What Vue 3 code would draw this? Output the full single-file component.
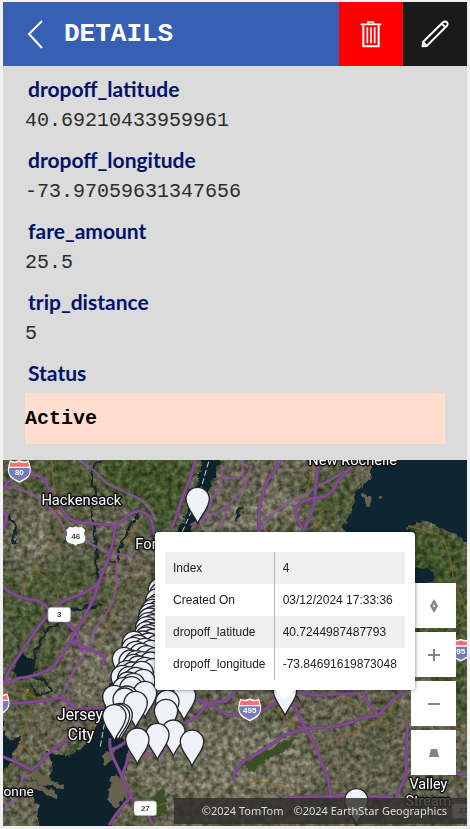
<script setup>
const fields = [
  { label: 'dropoff_latitude', value: '40.69210433959961' },
  { label: 'dropoff_longitude', value: '-73.97059631347656' },
  { label: 'fare_amount', value: '25.5' },
  { label: 'trip_distance', value: '5' }
]

const popupRows = [
  ['Index', '4'],
  ['Created On', '03/12/2024 17:33:36'],
  ['dropoff_latitude', '40.7244987487793'],
  ['dropoff_longitude', '-73.84691619873048']
]

// Pin tips, from the back of the stack to the front
const pins = [
  [593, 206], [1069, 1110], [855, 782],
  [480, 478], [484, 492], [472, 510], [478, 524], [464, 534], [458, 542], [474, 547],
  [452, 554], [462, 562], [449, 568], [470, 575], [446, 582], [458, 588], [441, 594],
  [452, 602], [440, 609], [464, 613], [447, 618], [438, 625], [459, 631], [428, 637],
  [402, 638], [446, 643], [414, 649], [470, 650], [400, 656], [434, 659], [454, 665],
  [408, 668], [423, 674], [440, 681], [372, 686], [466, 687], [392, 694], [410, 696],
  [428, 699], [452, 700], [402, 707], [415, 712], [436, 716], [460, 720], [380, 726],
  [398, 730], [425, 728], [368, 740], [388, 744], [408, 746], [430, 752], [384, 760],
  [400, 764], [372, 776], [394, 774], [435, 788], [343, 800], [380, 802], [374, 808],
  [552, 796], [502, 814], [498, 842], [407, 818], [362, 854], [354, 856], [343, 858],
  [520, 904], [472, 914], [412, 928], [576, 934]
]

const highways = [
  'M9 105 L22 82 L60 62 L110 60 Q132 66 145 98 L190 168 Q205 200 250 203 L346 212 L385 182 Q420 155 446 184 Q462 205 462 240',
  'M346 212 L340 255 Q330 310 298 376 Q286 430 255 480 L225 535 L205 568 Q180 610 160 635 Q120 664 55 670 L18 686',
  'M9 395 Q40 425 90 434 Q125 432 148 466 Q180 478 207 510 Q232 532 238 562 L244 590',
  'M302 374 Q278 405 225 425 Q180 435 145 475 Q90 550 45 620 Q20 650 12 690',
  'M210 558 L315 604 L307 630',
  'M20 746 Q95 745 180 728 L240 765 L312 758',
  'M586 15 Q570 80 550 120 Q535 175 512 226',
  'M9 905 L45 920 L95 945 Q130 920 140 900 L205 850',
  'M330 850 Q324 884 350 930 L393 1025 Q350 1070 328 1110',
  'M330 885 Q370 875 385 848',
  'M385 895 Q382 930 365 960',
  'M586 732 L622 745 L680 778 L760 785 L830 740',
  'M555 804 L590 785 L622 745 L680 738 L710 705',
  'M395 1028 Q440 1060 457 1108',
  'M870 710 Q890 775 915 820 L945 870 Q965 925 985 970 L994 1045',
  'M915 820 L850 842 Q790 890 730 918 Q705 940 698 978',
  'M915 820 Q1030 820 1080 790 L1135 780 L1190 725 L1215 708',
  'M885 708 L940 720 L1070 715',
  'M1085 700 Q1095 745 1135 780',
  'M1222 805 L1218 950 M1222 950 L1190 1025 M1010 1020 L1180 1026 M860 1028 L1035 1022',
  'M840 15 Q825 50 800 80 L779 150 L775 228',
  'M955 22 Q950 65 945 120 Q940 180 910 225 Q880 180 890 155 Q910 130 970 126 Q1000 115 1015 75 L1050 38',
  'M9 225 L20 190 L10 165 M1368 955 L1401 958'
]

const parkways = [
  'M9 96 Q70 96 120 132 Q170 170 194 225 Q245 255 310 285 Q370 304 395 305 L432 245',
  'M235 15 Q280 40 320 85 Q365 105 415 130 Q450 150 470 200',
  'M350 312 L350 390 Q345 450 300 500 Q270 545 250 600 Q205 670 184 730',
  'M665 70 Q660 105 635 130 L624 170 L600 206 M665 70 L720 68 M665 30 L665 70',
  'M728 15 L727 60 L735 90 Q710 125 680 155 Q620 190 570 210 M755 30 L732 100',
  'M1055 38 Q980 80 905 122 Q820 160 779 225',
  'M690 150 L670 190 L655 225',
  'M9 1065 L50 1030 L70 960 L92 975',
  'M205 720 L205 790 L240 805',
  'M405 895 L412 890 L480 905 L510 875'
]

const streets = [
  'M155 15 L162 100 Q180 190 180 230 L108 340 Q60 390 65 425',
  'M108 345 L155 385 Q180 415 172 440 L155 470',
  'M420 190 L370 285 M430 310 L385 390 Q330 480 310 545 L290 580',
  'M9 710 L60 715 L140 735 M65 700 L105 725 L55 880 L35 940',
  'M70 870 L102 910 M9 695 L40 685',
  'M790 735 L900 820 M930 875 L1080 825 L1160 780 L1200 735',
  'M1140 790 L1160 825 L1222 808 M700 995 L770 975 L880 1005',
  'M1225 212 L1320 240 Q1350 280 1360 370 L1401 470',
  'M940 228 L970 185 M920 110 L945 20 M1368 510 L1401 492',
  'M375 790 L430 785 M400 1075 L510 1040 M1368 820 L1401 824',
  'M1000 705 L1040 740 L1140 785'
]

const labels = [
  { x: 244, y: 151, text: 'Hackensack', size: 44 },
  { x: 1058, y: 30, text: 'New Rochelle', size: 44 },
  { x: 406, y: 281, text: 'Fort Lee', size: 44, anchor: 'start' },
  { x: 240, y: 794, text: 'Jersey', size: 47 },
  { x: 243, y: 855, text: 'City', size: 47 },
  { x: 101, y: 1022, text: 'Bayonne', size: 41, anchor: 'end' },
  { x: 1285, y: 1003, text: 'Valley', size: 43 },
  { x: 1285, y: 1053, text: 'Stream', size: 43 }
]

const interstates = [
  { x: 58, y: 48, text: '80' },
  { x: 749, y: 763, text: '495' },
  { x: 1382, y: 584, text: '95' },
  { x: -6, y: 747, text: '78' }
]

const stateRoutes = [
  { x: 178, y: 479, text: '3' },
  { x: 436, y: 1060, text: '27' },
  { x: 1390, y: 1068, text: '27' }
]
</script>

<template>
  <main class="screen">
    <header class="bar">
      <button class="back" type="button" aria-label="Back">
        <svg width="16" height="30" viewBox="0 0 16 30"><path d="M15 2 L2 15 L15 29" /></svg>
      </button>
      <h1>DETAILS</h1>
      <button class="tool remove" type="button" aria-label="Delete">
        <svg width="22" height="28" viewBox="0 0 66 84">
          <path d="M2 13 H64 M24 11 V6 H40 V11" stroke-width="5" />
          <path d="M10 16 V79 H56 V16" stroke-width="6" />
          <path d="M22 22 V70 M33 22 V70 M44 22 V70" stroke-width="5" />
        </svg>
      </button>
      <button class="tool edit" type="button" aria-label="Edit">
        <svg width="28" height="28" viewBox="0 0 84 84">
          <g stroke-width="6" stroke-linejoin="round">
            <path d="M5 79 L6 66 L66 7 Q72 2 78 7 Q82 12 77 18 L17 78 Z" />
            <path d="M6 66 L17 78 M62 11 L73 22" />
          </g>
        </svg>
      </button>
    </header>

    <section class="details">
      <dl>
        <div v-for="f in fields" :key="f.label" class="field">
          <dt>{{ f.label }}</dt>
          <dd>{{ f.value }}</dd>
        </div>
        <div class="field">
          <dt>Status</dt>
          <dd class="status">Active</dd>
        </div>
      </dl>
    </section>

    <section class="map" aria-label="Map">
      <svg class="tiles" viewBox="9 15 1392 1098" preserveAspectRatio="xMidYMid slice">
        <defs>
          <filter id="grain" x="0" y="0" width="100%" height="100%" color-interpolation-filters="sRGB">
            <feTurbulence type="fractalNoise" baseFrequency="0.06" numOctaves="4" seed="8" />
            <feColorMatrix values="1.3 0.1 0 0 -0.2  1.3 0 0 0 -0.14  1.3 0 0.1 0 -0.2  0 0 0 0 1" />
          </filter>
          <filter id="patches" x="0" y="0" width="100%" height="100%" color-interpolation-filters="sRGB">
            <feTurbulence type="fractalNoise" baseFrequency="0.011" numOctaves="5" seed="21" />
            <feColorMatrix values="0 0 0 0 0.2  0 0 0 0 0.29  0 0 0 0 0.12  0 6 0 0 -3" />
          </filter>
          <filter id="rough" x="-10%" y="-10%" width="120%" height="120%">
            <feTurbulence type="fractalNoise" baseFrequency="0.04" numOctaves="3" seed="4" />
            <feDisplacementMap in="SourceGraphic" scale="26" xChannelSelector="R" yChannelSelector="G" />
          </filter>
          <filter id="soft" x="-20%" y="-20%" width="140%" height="140%">
            <feGaussianBlur stdDeviation="16" />
          </filter>
          <path id="pin" d="M0 0 C-8 -24 -35 -46 -35 -74 A35 35 0 0 1 35 -74 C35 -46 8 -24 0 0 Z" />
        </defs>

        <rect x="9" y="15" width="1392" height="1098" fill="#646150" />
        <g filter="url(#soft)">
          <path class="wood" d="M300 0 H600 L520 230 L460 230 L430 170 L300 100 Z" />
          <path class="wood" d="M0 0 H230 L300 120 L240 200 L150 130 L0 110 Z" opacity=".6" />
          <path class="wood" d="M0 220 L70 230 L180 300 L290 300 L300 420 L200 520 L150 690 L60 720 L0 640 Z" opacity=".65" />
          <path class="wood" d="M690 960 L720 880 L860 850 L900 860 L780 930 Z" />
          <path class="wood" d="M1220 210 L1401 240 V820 L1230 600 Z" />
          <path class="wood" d="M840 100 L1060 20 L1060 190 L960 220 Z" opacity=".6" />
          <path class="urban" d="M560 800 L900 810 L960 1020 L450 1050 L400 950 Z" />
          <path class="urban" d="M630 190 L780 80 L900 120 L890 230 H620 Z" />
          <path class="urban" d="M240 540 L380 520 L330 700 L220 760 Z" />
          <path class="urban" d="M9 240 L120 160 L160 290 L60 380 Z" />
        </g>
        <rect x="9" y="15" width="1392" height="1098" filter="url(#patches)" opacity=".3" />
        <rect x="9" y="15" width="1392" height="1098" filter="url(#grain)" class="grain" />

        <g filter="url(#rough)">
          <path class="sea" d="M1110 -20 H1440 V290 L1385 250 L1330 222 L1275 198 L1220 215 L1240 250 H1030 L1032 205 L1060 165 L1055 130 L1080 100 L1110 70 Z" />
          <path class="sea" d="M1240 340 L1290 340 L1305 370 L1270 400 H1240 Z" />
          <path class="river" d="M610 0 H660 L640 80 L580 210 L560 250 H530 L550 200 L590 110 Z" />
          <path class="river" d="M330 830 L390 870 L375 950 L330 990 L385 1030 L320 1130 H110 L115 1060 L90 1000 L150 990 L160 930 L140 890 L210 905 L270 860 L310 780 L340 640 L350 830 Z" />
          <path class="river" d="M0 760 L20 850 L65 850 L50 880 L25 935 L0 955 Z" />
          <path class="river" d="M60 595 L110 620 L100 670 L55 670 L40 640 Z" />
          <path class="land" d="M1090 118 L1115 128 L1108 155 L1088 145 Z M1135 122 L1148 118 L1142 132 Z" />
          <path class="land" d="M95 945 L190 990 L185 1004 L100 975 Z M95 975 L175 1015 L168 1030 L88 1000 Z M305 905 L345 880 L340 915 L312 930 Z" />
          <path class="land" d="M330 970 L350 960 L385 1010 L350 1060 L325 1030 Z" />
          <path class="green" d="M468 1010 L495 1000 L500 1080 L400 1090 L405 1065 L460 1040 Z" />
          <path class="green" d="M205 890 L250 840 L235 880 Z M85 690 L125 715 L105 750 L80 740 Z M730 920 L850 860 L900 850 L860 880 L750 950 Z" />
          <path class="creek" d="M300 15 L275 50 L285 120 L275 170 L285 240 L290 300 L295 385 M415 180 L380 230 L350 320 L325 310" />
          <path class="creek" d="M190 500 L135 525 L105 600 L95 660 L140 680 L155 710 L110 720 L95 690 M180 470 L300 450" />
          <path class="creek" d="M25 180 L48 230 L40 270 M725 155 L705 190 M880 710 L895 745" />
        </g>

        <path class="ferry" d="M626 20 L600 110 L545 235 M318 780 L300 880" />
        <path v-for="d in streets" :key="d" class="street" :d="d" />
        <path v-for="d in parkways" :key="d" class="parkway" :d="d" />
        <path v-for="d in highways" :key="'c' + d" class="casing" :d="d" />
        <path v-for="d in highways" :key="d" class="highway" :d="d" />

        <text
          v-for="l in labels"
          :key="l.text"
          class="place"
          :x="l.x"
          :y="l.y"
          :font-size="l.size"
          :text-anchor="l.anchor || 'middle'"
        >{{ l.text }}</text>

        <g v-for="s in interstates" :key="s.text" :transform="`translate(${s.x} ${s.y})`">
          <path d="M-28 -32 Q-14 -25 0 -33 Q14 -25 28 -32 Q44 8 20 25 Q8 31 0 36 Q-8 31 -20 25 Q-44 8 -28 -32 Z" fill="#fff" />
          <path d="M-26 -27 Q-13 -21 0 -28 Q13 -21 26 -27 L30 -13 H-30 Z" fill="#ff6d70" />
          <path d="M-31 -9 H31 Q34 11 18 21 L0 31 L-18 21 Q-34 11 -31 -9 Z" fill="#777bb8" />
          <text class="route light" y="12">{{ s.text }}</text>
        </g>
        <g transform="translate(227 242)">
          <path d="M-18 -27 Q-9 -22 0 -28 Q9 -22 18 -27 L29 -16 Q22 -7 29 4 Q31 22 12 24 Q5 24 0 30 Q-5 24 -12 24 Q-31 22 -29 4 Q-22 -7 -29 -16 Z" fill="#fff" />
          <text class="route" y="9">46</text>
        </g>
        <g v-for="(s, i) in stateRoutes" :key="i" :transform="`translate(${s.x} ${s.y})`">
          <rect x="-34" y="-22" width="68" height="44" rx="9" fill="#fff" stroke="#999" stroke-width="2" />
          <text class="route" y="7">{{ s.text }}</text>
        </g>

        <use v-for="(p, i) in pins" :key="i" class="pin" href="#pin" :x="p[0]" :y="p[1]" />
      </svg>

      <div class="controls">
        <button type="button" aria-label="Reset rotation">
          <svg width="16" height="16" viewBox="0 0 16 16"><path fill-rule="evenodd" d="M8 1 L12 8 L8 15 L4 8 Z M8 5 L7 9 H9 Z" /></svg>
        </button>
        <button type="button" aria-label="Zoom in">
          <svg width="16" height="16" viewBox="0 0 16 16"><path d="M2 7 H7 V2 H9 V7 H14 V9 H9 V14 H7 V9 H2 Z" /></svg>
        </button>
        <button type="button" aria-label="Zoom out">
          <svg width="16" height="16" viewBox="0 0 16 16"><path d="M2 7 H14 V9 H2 Z" /></svg>
        </button>
        <button type="button" aria-label="Change pitch">
          <svg width="16" height="16" viewBox="0 0 16 16"><path d="M5 4 H11 L13 12 H3 Z" /></svg>
        </button>
      </div>

      <div class="popup" role="dialog" aria-label="Pin details">
        <table>
          <tbody>
            <tr v-for="row in popupRows" :key="row[0]">
              <th scope="row">{{ row[0] }}</th>
              <td>{{ row[1] }}</td>
            </tr>
          </tbody>
        </table>
      </div>

      <footer class="credits">
        <span>©2024 TomTom</span>
        <span>©2024 EarthStar Geographics</span>
      </footer>
    </section>
  </main>
</template>

<style>
body {
  background: #f0f0f1;
}
</style>

<style scoped>
.screen {
  display: flex;
  flex-direction: column;
  box-sizing: border-box;
  min-height: 100vh;
  padding: 2px 3px 3px;
}
.bar {
  display: flex;
  align-items: center;
  height: 64px;
  background: #3860b2;
  color: #fff;
}
button {
  display: flex;
  align-items: center;
  justify-content: center;
  padding: 0;
  border: 0;
  cursor: pointer;
}
.bar svg {
  fill: none;
  stroke: #fff;
}
.back {
  width: 64px;
  height: 64px;
  background: none;
}
.back path {
  stroke-width: 2;
}
h1 {
  flex: 1;
  margin: 0 0 0 -3px;
  font: bold 26px/32px "Liberation Mono", monospace;
}
.tool {
  width: 64px;
  height: 64px;
}
.remove {
  background: #f00;
}
.edit {
  background: #1b1a1a;
}
.details {
  padding: 7px 22px 16px;
  background: #dbdbdb;
}
dl {
  display: grid;
  gap: 7px;
  margin: 0;
}
dt {
  padding-left: 3px;
  font: bold 21px/32px Lato, sans-serif;
  color: #00126b;
}
dd {
  margin: 0;
  font: 20px/32px "Liberation Mono", monospace;
  color: #2c2c2c;
}
.status {
  margin-top: 4px;
  background: #ffddcf;
  font-weight: bold;
  line-height: 51px;
  color: #000;
}
.map {
  position: relative;
  flex: 1;
  min-height: 366px;
  overflow: hidden;
  background: #56563f;
}
.tiles {
  position: absolute;
  width: 100%;
  height: 100%;
}
.wood {
  fill: #45552f;
}
.urban {
  fill: #756f60;
}
.grain {
  mix-blend-mode: overlay;
  opacity: 0.5;
}
.sea {
  fill: #082633;
}
.river {
  fill: #11232b;
}
.land {
  fill: #66624c;
}
.green {
  fill: #3b4f26;
}
.creek {
  fill: none;
  stroke: #18272a;
  stroke-width: 8;
}
.ferry {
  fill: none;
  stroke: #cdd3d3;
  stroke-width: 3;
  stroke-dasharray: 18 8;
}
.street {
  fill: none;
  stroke: #8b6824;
  stroke-width: 4;
  opacity: 0.75;
}
.parkway {
  fill: none;
  stroke: #8d559b;
  stroke-width: 7;
  opacity: 0.8;
}
.casing {
  fill: none;
  stroke: #65407a;
  stroke-width: 10;
  stroke-linejoin: round;
}
.highway {
  fill: none;
  stroke: #844a94;
  stroke-width: 7;
  stroke-linejoin: round;
}
.place {
  fill: #fff;
  stroke: #111;
  stroke-width: 9;
  stroke-linejoin: round;
  paint-order: stroke;
  font-family: Roboto, sans-serif;
}
.route {
  fill: #444;
  font: bold 24px "Liberation Sans", sans-serif;
  text-anchor: middle;
}
.light {
  fill: #fff;
}
.pin {
  fill: #eff3f9;
  stroke: #25252a;
  stroke-width: 4;
}
.controls {
  position: absolute;
  right: 11px;
  bottom: 51px;
  display: grid;
  gap: 4px;
}
.controls button {
  width: 45px;
  height: 45px;
  background: #fff;
}
.controls svg {
  fill: #7f8589;
}
.popup {
  position: absolute;
  top: 72px;
  left: 152px;
  box-sizing: border-box;
  width: 260px;
  padding: 20px 10px 10px;
  border-radius: 4px;
  background: #fff;
  box-shadow: 0 0 4px rgba(0, 0, 0, 0.5);
}
.popup::after {
  content: "";
  position: absolute;
  top: 100%;
  left: 120px;
  border: 10px solid transparent;
  border-top-color: #fff;
  border-bottom: 0;
}
table {
  width: 100%;
  border-collapse: collapse;
  font: 12px/16px "Liberation Sans", sans-serif;
  color: #222;
}
th,
td {
  padding: 8px;
  font-weight: normal;
  text-align: left;
  white-space: nowrap;
}
th {
  border-right: 1px solid #b5b5b5;
}
tr:nth-child(odd) {
  background: #efefef;
}
.credits {
  position: absolute;
  right: 0;
  bottom: 2px;
  display: flex;
  gap: 10px;
  padding: 0 20px 0 28px;
  background: rgba(50, 48, 46, 0.85);
  font: 11px/26px "Noto Sans", sans-serif;
  color: #dcdcdc;
}
</style>
